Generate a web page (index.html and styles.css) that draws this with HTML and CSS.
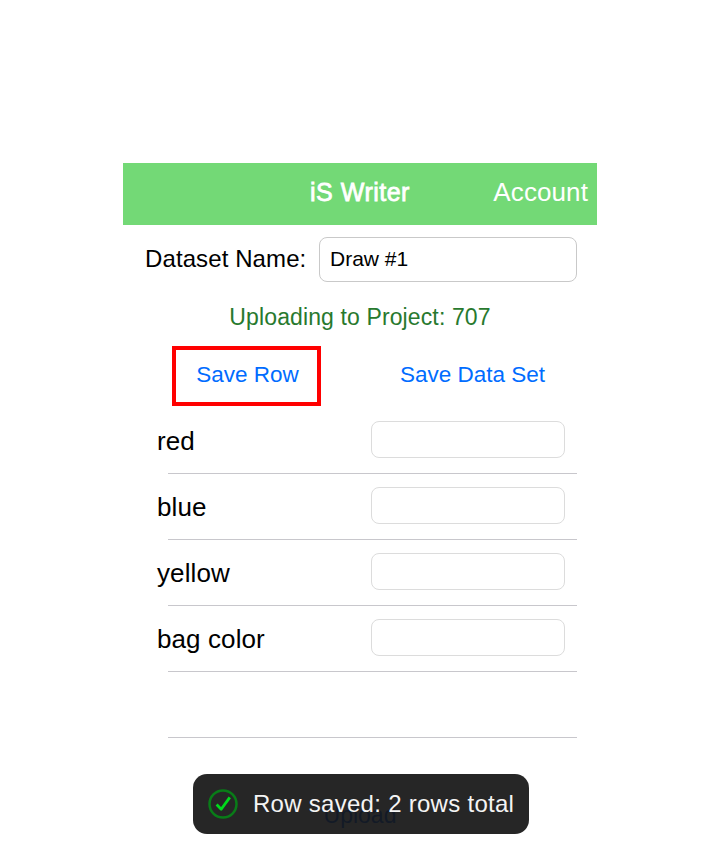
FILE: index.html
```html
<!DOCTYPE html>
<html lang="en">
<head>
<meta charset="utf-8">
<title>iS Writer</title>
<link rel="stylesheet" href="styles.css">
</head>
<body>
<main class="app">
  <header class="navbar">
    <h1 class="title">iS Writer</h1>
    <a class="account">Account</a>
  </header>
  <div class="dataset">
    <label class="dataset-label" for="name">Dataset Name:</label>
    <input class="dataset-input" id="name" value="Draw #1">
  </div>
  <p class="status">Uploading to Project: 707</p>
  <div class="actions">
    <button class="action save-row">Save Row</button>
    <button class="action save-set">Save Data Set</button>
  </div>
  <ul class="fields">
    <li class="field"><span class="name">red</span><input class="value" aria-label="red"></li>
    <li class="field"><span class="name">blue</span><input class="value" aria-label="blue"></li>
    <li class="field"><span class="name">yellow</span><input class="value" aria-label="yellow"></li>
    <li class="field"><span class="name">bag color</span><input class="value" aria-label="bag color"></li>
    <li class="field"></li>
  </ul>
  <button class="upload">Upload</button>
  <div class="toast" role="status">
    <svg class="check" viewBox="0 0 30 30" width="30" height="30" fill="none">
      <circle cx="15" cy="15" r="13.5" stroke="#097c18" stroke-width="2.5"/>
      <path d="M8.6 15.6l4.6 4.6L21.8 8.4" stroke="#00d91c" stroke-width="2.8" stroke-linejoin="round"/>
    </svg>
    <span class="message">Row saved: 2 rows total</span>
  </div>
</main>
</body>
</html>
```
FILE: styles.css
```css
* { box-sizing: border-box; }
body {
  margin: 0;
  height: 864px;
  padding-top: 163px;
  background: #fff;
  color: #000;
  font-family: "Liberation Sans", Arial, sans-serif;
  overflow: hidden;
}
button, input { font: inherit; margin: 0; background: transparent; }
.app { position: relative; width: 474px; margin: 0 auto; }
.navbar {
  display: grid;
  grid-template-columns: 1fr auto 1fr;
  align-items: center;
  height: 62px;
  padding: 0 9px 3px;
  background: #73d976;
  color: #fff;
}
.title { grid-column: 2; margin: 0; font-size: 25px; font-weight: 400; letter-spacing: .5px; -webkit-text-stroke: .8px #fff; }
.account { justify-self: end; font-size: 26px; letter-spacing: .1px; }
.dataset { display: flex; align-items: center; height: 57px; padding: 12px 20px 0 22px; justify-content: space-between; }
.dataset-label { font-size: 24px; letter-spacing: .1px; padding-bottom: 1px; }
.dataset-input { width: 258px; height: 45px; padding: 0 10px 2px; border: 1px solid #c9c9c9; border-radius: 8px; font-size: 21px; }
.status { margin: 22px 0 0; height: 42px; line-height: 27px; text-align: center; color: #28792e; font-size: 23px; letter-spacing: .12px; }
.actions { display: flex; height: 60px; padding-left: 49px; }
.action { border: 0; padding: 0 0 3px; color: #006cff; font-size: 22.5px; white-space: nowrap; }
.save-row { width: 149px; border: 4px solid #f00; padding-left: 2px; }
.save-set { margin-left: 79px; }
.fields { list-style: none; margin: 2px 0 0; padding: 0 20px 0 34px; }
.field {
  display: flex;
  align-items: center;
  justify-content: space-between;
  height: 66px;
  padding-right: 12px;
  background: linear-gradient(#c8c7cc, #c8c7cc) 11px 100% / calc(100% - 11px) 1px no-repeat;
}
.name { font-size: 26px; letter-spacing: .1px; padding-top: 1px; }
.value { width: 194px; height: 37px; margin-top: -3px; border: 1px solid #dcdcdc; border-radius: 8px; }
.upload { display: block; margin: 60px auto 0; border: 0; padding: 0; color: #80b0ff; font-size: 23px; line-height: 34px; }
.toast {
  position: absolute;
  left: 70px;
  top: 611px;
  display: flex;
  align-items: center;
  width: 336px;
  height: 60px;
  padding-left: 15px;
  border-radius: 14px;
  background: rgba(0, 0, 0, .85);
  color: #f4f4f4;
}
.message { margin-left: 15px; font-size: 24px; letter-spacing: .28px; white-space: nowrap; }
```
